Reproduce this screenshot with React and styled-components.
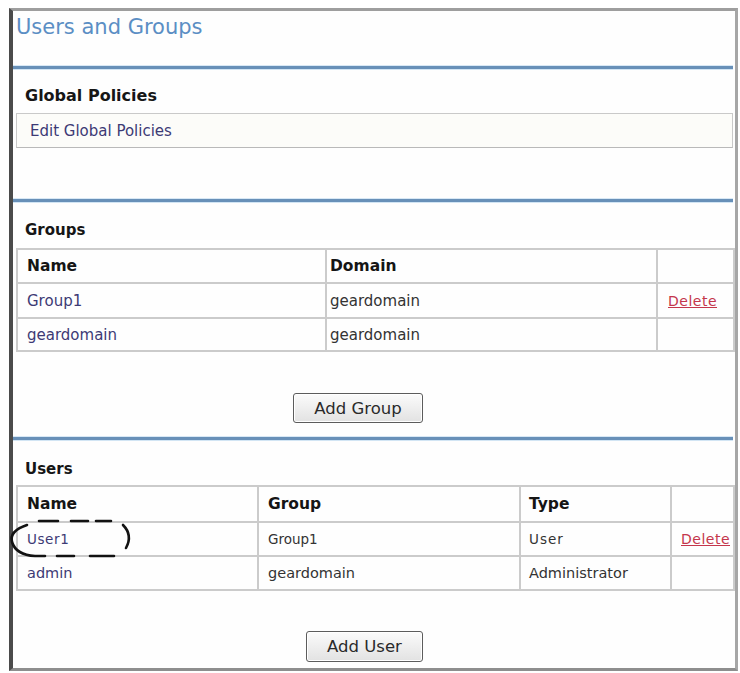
import React from "react";
import styled, { createGlobalStyle } from "styled-components";

const GlobalStyle = createGlobalStyle`
  html, body {
    margin: 0;
    padding: 0;
    background: #ffffff;
  }
  body {
    font-family: "DejaVu Sans", "Liberation Sans", sans-serif;
  }
`;

const Frame = styled.div`
  box-sizing: border-box;
  margin: 8px 0 0 9px;
  width: 729px;
  height: 663px;
  border-left: 4px solid #4b4b4b;
  border-top: 3px solid #9e9e9e;
  border-right: 3px solid #a6a6a6;
  border-bottom: 3px solid #8e8e8e;
  background: #fefefe;
  padding-right: 2px;
  display: flex;
  flex-direction: column;
`;

const TitleBar = styled.div`
  box-sizing: border-box;
  height: 55px;
  padding: 4px 0 0 3px;
  font-size: 21px;
  line-height: 24px;
  color: #5b8ec4;
`;

const Rule = styled.div`
  height: 3px;
  flex: none;
  background: #6890b8;
  box-shadow: 0 -1px 0 #d8e8f5, 0 1px 0 #d2e5f4;
`;

const Section = styled.section`
  box-sizing: border-box;
  height: ${(p) => p.$h}px;
  padding: ${(p) => p.$top}px 0 0 3px;
  display: flex;
  flex-direction: column;
`;

const Heading = styled.h2`
  margin: 0 0 ${(p) => p.$gap}px;
  padding-left: 9px;
  font-size: ${(p) => p.$size || 15}px;
  line-height: 20px;
  font-weight: bold;
  color: #161616;
`;

const LinkBox = styled.div`
  box-sizing: border-box;
  height: 35px;
  padding: 2px 0 0 13px;
  border: 1px solid #c9c9c9;
  border-bottom-color: #b9b9b9;
  background: #fcfcf9;
  font-size: 15px;
  line-height: 31px;
  color: #3d3a75;
`;

const Table = styled.table`
  width: 717px;
  border-collapse: collapse;
  table-layout: fixed;
`;

const Row = styled.tr`
  height: ${(p) => p.$h}px;
`;

const Cell = styled.td`
  position: relative;
  padding: 0 0 0 ${(p) => p.$pad}px;
  border: 2px solid #cbcbcb;
  font-size: ${(p) => p.$size || 14.5}px;
  letter-spacing: ${(p) => p.$ls || 0}px;
  font-weight: ${(p) => (p.$head ? "bold" : "normal")};
  color: ${(p) => (p.$head ? "#151515" : p.$link ? "#3d3a75" : "#333333")};
  white-space: nowrap;
  overflow: visible;
  vertical-align: middle;
`;

const Delete = styled.span`
  font-size: 14px;
  letter-spacing: 0.5px;
  color: #c4364c;
  text-decoration: underline;
`;

const ButtonRow = styled.div`
  display: flex;
  justify-content: flex-end;
  padding-right: 310px;
  margin-top: ${(p) => p.$top}px;
`;

const Button = styled.button`
  box-sizing: border-box;
  width: ${(p) => p.$w}px;
  height: ${(p) => p.$h}px;
  padding: 0;
  font-family: "DejaVu Sans", "Liberation Sans", sans-serif;
  font-size: 16.5px;
  color: #2a2a2a;
  background: linear-gradient(#fbfbfb, #e2e2e2);
  border: 1px solid #5c5c5c;
  border-radius: 3px;
  box-shadow: inset 0 0 0 1px #ffffff;
`;

const Mark = styled.svg`
  position: absolute;
  left: -10px;
  top: -7px;
  overflow: visible;
  pointer-events: none;
`;

function DashedMark() {
  return (
    <Mark width="130" height="46" viewBox="0 0 130 46">
      <g fill="none" stroke="#121212" strokeWidth="2.6" strokeLinecap="round">
        <path d="M31 5 L50 5 M63 5 L80 5 M88 5 L103 5" />
        <path d="M19 9 Q1 15 4 26 Q8 39 27 40 L37 40" />
        <path d="M49 40 L66 40 M82 40 L106 40" />
        <path d="M115 9 Q125 19 118 32" />
      </g>
    </Mark>
  );
}

const groups = [
  { name: "Group1", domain: "geardomain", del: true },
  { name: "geardomain", domain: "geardomain", del: false },
];

const users = [
  { name: "User1", group: "Group1", type: "User", del: true, mark: true },
  { name: "admin", group: "geardomain", type: "Administrator", del: false },
];

function App() {
  return (
    <>
      <GlobalStyle />
      <Frame>
        <TitleBar>Users and Groups</TitleBar>
        <Rule />
        <Section $h={130} $top={17}>
          <Heading $gap={7} $size={16}>Global Policies</Heading>
          <LinkBox>Edit Global Policies</LinkBox>
        </Section>
        <Rule />
        <Section $h={235} $top={18}>
          <Heading $gap={8}>Groups</Heading>
          <Table>
            <colgroup>
              <col style={{ width: 309 }} />
              <col style={{ width: 331 }} />
              <col style={{ width: 77 }} />
            </colgroup>
            <tbody>
              <Row $h={34}>
                <Cell $head $pad={9} $size={15.5}>Name</Cell>
                <Cell $head $pad={3} $size={15.5}>Domain</Cell>
                <Cell $pad={10} />
              </Row>
              {groups.map((g, i) => (
                <Row key={g.name} $h={i === 0 ? 35 : 33}>
                  <Cell $link $pad={9} $size={15}>{g.name}</Cell>
                  <Cell $pad={3} $size={15}>{g.domain}</Cell>
                  <Cell $pad={10}>{g.del && <Delete>Delete</Delete>}</Cell>
                </Row>
              ))}
            </tbody>
          </Table>
          <ButtonRow $top={41}>
            <Button $w={130} $h={30}>Add Group</Button>
          </ButtonRow>
        </Section>
        <Rule />
        <Section $h={228} $top={19}>
          <Heading $gap={6}>Users</Heading>
          <Table>
            <colgroup>
              <col style={{ width: 241 }} />
              <col style={{ width: 262 }} />
              <col style={{ width: 151 }} />
              <col style={{ width: 63 }} />
            </colgroup>
            <tbody>
              <Row $h={36}>
                <Cell $head $pad={9} $size={15.5}>Name</Cell>
                <Cell $head $pad={9} $size={15.5}>Group</Cell>
                <Cell $head $pad={8} $size={15.5}>Type</Cell>
                <Cell $pad={9} />
              </Row>
              {users.map((u) => (
                <Row key={u.name} $h={34}>
                  <Cell $link $pad={9} $size={u.mark ? 13.5 : 14.5} $ls={u.mark ? 0.6 : 0}>
                    {u.mark && <DashedMark />}
                    {u.name}
                  </Cell>
                  <Cell $pad={9} $size={u.mark ? 13.5 : 14.5}>{u.group}</Cell>
                  <Cell $pad={8} $size={u.mark ? 13.5 : 14.5} $ls={u.mark ? 1 : 0}>{u.type}</Cell>
                  <Cell $pad={9}>{u.del && <Delete>Delete</Delete>}</Cell>
                </Row>
              ))}
            </tbody>
          </Table>
          <ButtonRow $top={40}>
            <Button $w={117} $h={31}>Add User</Button>
          </ButtonRow>
        </Section>
      </Frame>
    </>
  );
}

export default App;
